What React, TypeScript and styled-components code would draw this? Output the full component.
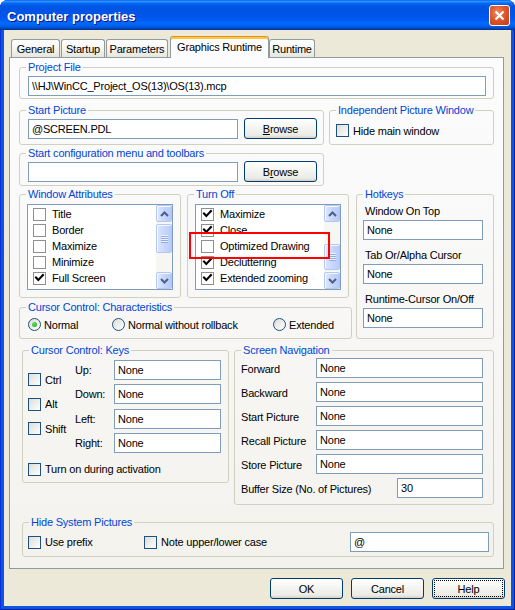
import React from "react";
import styled, { createGlobalStyle } from "styled-components";

const GlobalStyle = createGlobalStyle`
  html, body {
    margin: 0;
    padding: 0;
    background: #fff;
  }
  body {
    font-family: "Liberation Sans", Arial, sans-serif;
    font-size: 11px;
    letter-spacing: -0.2px;
    color: #000;
  }
  * {
    box-sizing: border-box;
  }
`;

/* ---------- window chrome ---------- */

const Window = styled.div`
  width: 515px;
  height: 610px;
  display: flex;
  flex-direction: column;
  background: #0d54e0;
  box-shadow: inset 1px 0 #0831d9, inset -1px 0 #001ea0, inset 0 -1px #001ea0;
  border-radius: 8px 8px 0 0;
  overflow: hidden;
`;

const TitleBar = styled.div`
  height: 30px;
  flex: none;
  display: flex;
  align-items: center;
  justify-content: space-between;
  padding: 0 5px 0 7px;
  background: linear-gradient(
    to bottom,
    #0058ee 0%,
    #3593ff 4%,
    #288eff 6%,
    #127dff 8%,
    #036ffc 10%,
    #0262ee 14%,
    #0057e5 20%,
    #0054e3 24%,
    #0055eb 56%,
    #005bf5 66%,
    #026afe 76%,
    #0062ef 86%,
    #0052d6 92%,
    #0040ab 96%,
    #003092 100%
  );
`;

const Title = styled.span`
  padding-top: 2px;
  color: #fff;
  font-weight: bold;
  font-size: 13px;
  letter-spacing: 0;
  text-shadow: 1px 1px #0f1089;
`;

const CloseButton = styled.div`
  width: 21px;
  height: 21px;
  border: 1px solid #fff;
  border-radius: 3px;
  display: flex;
  align-items: center;
  justify-content: center;
  background: radial-gradient(circle at 40% 35%, #f08a64 0%, #e0572c 45%, #c43a12 100%);
`;

const Client = styled.div`
  flex: 1;
  margin: 0 4px 4px;
  background: #ece9d8;
  padding: 6px 7px 0 5px;
  display: flex;
  flex-direction: column;
`;

/* ---------- tabs ---------- */

const TabRow = styled.div`
  height: 21px;
  display: flex;
  align-items: flex-end;
  gap: 1px;
  padding-left: 2px;
`;

const Tab = styled.div<{ $w: number; $active?: boolean }>`
  width: ${({ $w }) => $w}px;
  height: ${({ $active }) => ($active ? 22 : 18)}px;
  display: flex;
  align-items: center;
  justify-content: center;
  border: 1px solid #919b9c;
  border-bottom: none;
  border-radius: 3px 3px 0 0;
  background: ${({ $active }) =>
    $active ? "#fcfcfe" : "linear-gradient(to bottom, #fff, #f7f7f5 40%, #e7e6df)"};
  ${({ $active }) =>
    $active &&
    `
    position: relative;
    z-index: 1;
    margin: 0 -1px -1px 1px;
    padding-bottom: 2px;
    border-top: 1px solid #e68b2c;
    box-shadow: inset 0 2px 0 #ffc73c;
  `}
`;

const Panel = styled.div`
  height: 512px;
  display: flex;
  flex-direction: column;
  border: 1px solid #919b9c;
  background: linear-gradient(to bottom, #fcfcfe, #f3f2ed);
  padding: 3px 9px 0 9px;
`;

const Row = styled.div<{ $cols: string; $mt?: number; $ml?: number; $gap?: number }>`
  display: grid;
  grid-template-columns: ${({ $cols }) => $cols};
  column-gap: ${({ $gap }) => $gap ?? 5}px;
  align-items: start;
  margin-top: ${({ $mt }) => $mt ?? 0}px;
  margin-left: ${({ $ml }) => $ml ?? 0}px;
`;

const Column = styled.div<{ $gap: number }>`
  display: flex;
  flex-direction: column;
  gap: ${({ $gap }) => $gap}px;
`;

/* ---------- group boxes ---------- */

const Group = styled.fieldset<{ $h: number }>`
  margin: 0;
  padding: 0;
  min-width: 0;
  height: ${({ $h }) => $h}px;
  border: 1px solid #d0d0bf;
  border-radius: 3px;
`;

const Legend = styled.legend`
  margin-left: 6px;
  padding: 0 2px;
  line-height: 13px;
  color: #0046d5;
`;

const Body = styled.div<{ $pad: string }>`
  padding: ${({ $pad }) => $pad};
`;

const InlineRow = styled.div<{ $gap?: number }>`
  display: flex;
  align-items: center;
  gap: ${({ $gap }) => $gap ?? 0}px;
`;

/* ---------- controls ---------- */

const TextBox = styled.input<{ $w?: number }>`
  width: ${({ $w }) => ($w ? `${$w}px` : "100%")};
  height: 20px;
  flex: none;
  border: 1px solid #7f9db9;
  background: #fff;
  padding: 0 3px;
  margin: 0;
  font: inherit;
  letter-spacing: inherit;
  color: #000;
  outline: none;
`;

const XpButton = styled.button<{ $focus?: boolean }>`
  width: 73px;
  height: 21px;
  flex: none;
  padding: 0;
  border: 1px solid #003c74;
  border-radius: 3px;
  background: linear-gradient(to bottom, #fff 0%, #f3f3ef 50%, #ecebe6 85%, #d6d0c5 100%);
  font: inherit;
  letter-spacing: inherit;
  color: #000;
  outline: ${({ $focus }) => ($focus ? "1px dotted #000" : "none")};
  outline-offset: -3px;
`;

const Box = styled.span<{ $flat?: boolean }>`
  width: 13px;
  height: 13px;
  flex: none;
  display: inline-flex;
  align-items: center;
  justify-content: center;
  border: 1px solid ${({ $flat }) => ($flat ? "#8e8f8f" : "#1c5180")};
  background: ${({ $flat }) => ($flat ? "#fff" : "linear-gradient(135deg, #dcdcd7 0%, #fff 100%)")};
`;

const CheckMark = () => (
  <svg width="11" height="11" viewBox="0 0 11 11">
    <path d="M2 4.5 L4.3 7 L9 2" fill="none" stroke="#000" strokeWidth="2" strokeLinecap="square" />
  </svg>
);

const CheckBox = ({ checked, flat }: { checked?: boolean; flat?: boolean }) => (
  <Box $flat={flat}>{checked && <CheckMark />}</Box>
);

const CheckLabel = styled.label<{ $w?: number; $mt?: number; $grow?: boolean }>`
  display: flex;
  align-items: center;
  gap: 4px;
  height: 13px;
  width: ${({ $w }) => ($w ? `${$w}px` : "auto")};
  flex: ${({ $grow }) => ($grow ? 1 : "none")};
  margin-top: ${({ $mt }) => $mt ?? 0}px;
  white-space: nowrap;
`;

const RadioDot = styled.span<{ $on?: boolean }>`
  width: 13px;
  height: 13px;
  flex: none;
  border-radius: 50%;
  border: 1px solid #1c5180;
  background: linear-gradient(135deg, #dcdcd7 0%, #fff 100%);
  display: inline-flex;
  align-items: center;
  justify-content: center;
  &::after {
    content: "";
    display: ${({ $on }) => ($on ? "block" : "none")};
    width: 5px;
    height: 5px;
    border-radius: 50%;
    background: radial-gradient(circle at 35% 35%, #63e25e, #21a121);
  }
`;

const RadioOption = styled.label<{ $w?: number }>`
  display: flex;
  align-items: center;
  gap: 3px;
  width: ${({ $w }) => ($w ? `${$w}px` : "auto")};
  white-space: nowrap;
`;

/* ---------- list box with XP scroll bar ---------- */

const ListWrap = styled.div`
  position: relative;
  width: 146px;
`;

const ListFrame = styled.div`
  width: 146px;
  height: 86px;
  display: flex;
  border: 1px solid #7f9db9;
  background: #fff;
  overflow: hidden;
`;

const ListItems = styled.div`
  flex: 1;
  padding-top: 1px;
  overflow: hidden;
`;

const ListItem = styled.div`
  height: 16px;
  display: flex;
  align-items: center;
  gap: 6px;
  padding-left: 5px;
  white-space: nowrap;
`;

const ScrollBar = styled.div`
  width: 16px;
  flex: none;
  display: flex;
  flex-direction: column;
  background: #f6f6f2;
`;

const ScrollButton = styled.div`
  height: 17px;
  flex: none;
  display: flex;
  align-items: center;
  justify-content: center;
  border: 1px solid #b4c6f3;
  border-radius: 2px;
  background: linear-gradient(to right, #dfe8fe, #c2d3fc 60%, #b7cafa);
  box-shadow: inset 1px 1px #f6f9ff;
`;

const Track = styled.div<{ $end?: boolean }>`
  flex: 1;
  display: flex;
  flex-direction: column;
  justify-content: ${({ $end }) => ($end ? "flex-end" : "flex-start")};
  padding: 2px 0;
`;

const Thumb = styled.div<{ $h: number }>`
  height: ${({ $h }) => $h}px;
  display: flex;
  align-items: center;
  justify-content: center;
  border: 1px solid #b4c6f3;
  border-radius: 2px;
  background: linear-gradient(to right, #dbe5fd, #c6d5fc 60%, #b9cbfa);
  box-shadow: inset 1px 1px #f6f9ff;
`;

const Grip = styled.span`
  width: 7px;
  height: 8px;
  background: repeating-linear-gradient(to bottom, #eef3fe 0 1px, #8daaea 1px 2px);
`;

const Chevron = ({ down }: { down?: boolean }) => (
  <svg width="9" height="6" viewBox="0 0 9 6">
    <path
      d={down ? "M1 1 L4.5 4.5 L8 1" : "M1 5 L4.5 1.5 L8 5"}
      fill="none"
      stroke="#4d6185"
      strokeWidth="2"
    />
  </svg>
);

const Highlight = styled.div`
  position: absolute;
  left: -6px;
  top: 28px;
  width: 141px;
  height: 27px;
  border: 2px solid #ff0000;
  pointer-events: none;
`;

type Item = [string, boolean];

const ListBox = ({
  items,
  thumbH,
  thumbEnd,
}: {
  items: Item[];
  thumbH: number;
  thumbEnd?: boolean;
}) => (
  <ListFrame>
    <ListItems>
      {items.map(([label, checked]) => (
        <ListItem key={label}>
          <CheckBox flat checked={checked} />
          <span>{label}</span>
        </ListItem>
      ))}
    </ListItems>
    <ScrollBar>
      <ScrollButton>
        <Chevron />
      </ScrollButton>
      <Track $end={thumbEnd}>
        <Thumb $h={thumbH}>
          <Grip />
        </Thumb>
      </Track>
      <ScrollButton>
        <Chevron down />
      </ScrollButton>
    </ScrollBar>
  </ListFrame>
);

/* ---------- hotkeys / keys / navigation ---------- */

const HotkeyBody = styled.div`
  display: flex;
  flex-direction: column;
  gap: 9px;
  padding: 4px 10px 0 6px;
`;

const HotkeyItem = styled.div`
  display: flex;
  flex-direction: column;
  gap: 2px;
`;

const HotkeyLabel = styled.span`
  line-height: 13px;
  padding-left: 2px;
  white-space: nowrap;
`;

const KeysGrid = styled.div`
  display: grid;
  grid-template-columns: 47px 39px 107px;
  grid-auto-rows: 20px;
  row-gap: 4.33px;
  align-items: center;
`;

const ModColumn = styled.div`
  grid-column: 1;
  grid-row: 1 / 5;
  align-self: stretch;
  display: flex;
  flex-direction: column;
  justify-content: center;
  gap: 11.5px;
  padding-bottom: 4px;
`;

const NavGrid = styled.div`
  display: grid;
  grid-template-columns: 75px 167px;
  grid-auto-rows: 20px;
  row-gap: 4px;
  align-items: center;
`;

const NavLabel = styled.span`
  padding-top: 2px;
  white-space: nowrap;
`;

const BufferRow = styled.div`
  grid-column: 1 / -1;
  display: flex;
  align-items: center;
  justify-content: space-between;
`;

const ButtonRow = styled.div`
  display: flex;
  justify-content: flex-end;
  gap: 8px;
  margin: 9px -1px 0 0;
`;

const windowAttributes: Item[] = [
  ["Title", false],
  ["Border", false],
  ["Maximize", false],
  ["Minimize", false],
  ["Full Screen", true],
];

const turnOff: Item[] = [
  ["Maximize", true],
  ["Close", true],
  ["Optimized Drawing", false],
  ["Decluttering", true],
  ["Extended zooming", true],
];

const navRows = ["Forward", "Backward", "Start Picture", "Recall Picture", "Store Picture"];

export default function App() {
  return (
    <>
      <GlobalStyle />
      <Window>
        <TitleBar>
          <Title>Computer properties</Title>
          <CloseButton>
            <svg width="11" height="11" viewBox="0 0 11 11">
              <path d="M1.5 1.5 L9.5 9.5 M9.5 1.5 L1.5 9.5" stroke="#fff" strokeWidth="2.2" />
            </svg>
          </CloseButton>
        </TitleBar>

        <Client>
          <TabRow>
            <Tab $w={49}>General</Tab>
            <Tab $w={44}>Startup</Tab>
            <Tab $w={62}>Parameters</Tab>
            <Tab $w={99} $active>
              Graphics Runtime
            </Tab>
            <Tab $w={46}>Runtime</Tab>
          </TabRow>

          <Panel>
            <Group $h={38}>
              <Legend>Project File</Legend>
              <Body $pad="2px 7px 0 8px">
                <TextBox defaultValue={"\\\\HJ\\WinCC_Project_OS(13)\\OS(13).mcp"} />
              </Body>
            </Group>

            <Row $cols="305px 1fr" $mt={5}>
              <Column $gap={2}>
                <Group $h={41}>
                  <Legend>Start Picture</Legend>
                  <Body $pad="1px 0 0 8px">
                    <InlineRow $gap={6}>
                      <TextBox $w={210} defaultValue="@SCREEN.PDL" />
                      <XpButton>
                        <u>B</u>rowse
                      </XpButton>
                    </InlineRow>
                  </Body>
                </Group>
                <Group $h={39}>
                  <Legend>Start configuration menu and toolbars</Legend>
                  <Body $pad="1px 0 0 8px">
                    <InlineRow $gap={6}>
                      <TextBox $w={210} defaultValue="" />
                      <XpButton>
                        B<u>r</u>owse
                      </XpButton>
                    </InlineRow>
                  </Body>
                </Group>
              </Column>
              <Group $h={41}>
                <Legend>Independent Picture Window</Legend>
                <Body $pad="7px 0 0 6px">
                  <CheckLabel>
                    <CheckBox />
                    Hide main window
                  </CheckLabel>
                </Body>
              </Group>
            </Row>

            <Row $cols="333px 1fr" $mt={2} $gap={4}>
              <Column $gap={3}>
                <Row $cols="162px 162px" $gap={6}>
                  <Group $h={110}>
                    <Legend>Window Attributes</Legend>
                    <Body $pad="3px 0 0 7px">
                      <ListBox items={windowAttributes} thumbH={29} />
                    </Body>
                  </Group>
                  <Group $h={110}>
                    <Legend>Turn Off</Legend>
                    <Body $pad="3px 0 0 7px">
                      <ListWrap>
                        <ListBox items={turnOff} thumbH={26} thumbEnd />
                        <Highlight />
                      </ListWrap>
                    </Body>
                  </Group>
                </Row>
                <Group $h={38}>
                  <Legend>Cursor Control: Characteristics</Legend>
                  <Body $pad="4px 0 0 8px">
                    <InlineRow>
                      <RadioOption $w={84}>
                        <RadioDot $on />
                        Normal
                      </RadioOption>
                      <RadioOption $w={161}>
                        <RadioDot />
                        Normal without rollback
                      </RadioOption>
                      <RadioOption>
                        <RadioDot />
                        Extended
                      </RadioOption>
                    </InlineRow>
                  </Body>
                </Group>
              </Column>
              <Group $h={151}>
                <Legend>Hotkeys</Legend>
                <HotkeyBody>
                  <HotkeyItem>
                    <HotkeyLabel>Window On Top</HotkeyLabel>
                    <TextBox $w={120} defaultValue="None" />
                  </HotkeyItem>
                  <HotkeyItem>
                    <HotkeyLabel>Tab Or/Alpha Cursor</HotkeyLabel>
                    <TextBox $w={120} defaultValue="None" />
                  </HotkeyItem>
                  <HotkeyItem>
                    <HotkeyLabel>Runtime-Cursor On/Off</HotkeyLabel>
                    <TextBox $w={120} defaultValue="None" />
                  </HotkeyItem>
                </HotkeyBody>
              </Group>
            </Row>

            <Row $cols="207px 1fr" $mt={5} $ml={3}>
              <Group $h={139}>
                <Legend>Cursor Control: Keys</Legend>
                <Body $pad="3px 6px 0 5px">
                  <KeysGrid>
                    <ModColumn>
                      <CheckLabel>
                        <CheckBox />
                        Ctrl
                      </CheckLabel>
                      <CheckLabel>
                        <CheckBox />
                        Alt
                      </CheckLabel>
                      <CheckLabel>
                        <CheckBox />
                        Shift
                      </CheckLabel>
                    </ModColumn>
                    {["Up:", "Down:", "Left:", "Right:"].map((k) => (
                      <React.Fragment key={k}>
                        <span>{k}</span>
                        <TextBox defaultValue="None" />
                      </React.Fragment>
                    ))}
                  </KeysGrid>
                  <CheckLabel $mt={10}>
                    <CheckBox />
                    Turn on during activation
                  </CheckLabel>
                </Body>
              </Group>
              <Group $h={161}>
                <Legend>Screen Navigation</Legend>
                <Body $pad="1px 9px 0 6px">
                  <NavGrid>
                    {navRows.map((n) => (
                      <React.Fragment key={n}>
                        <NavLabel>{n}</NavLabel>
                        <TextBox defaultValue="None" />
                      </React.Fragment>
                    ))}
                    <BufferRow>
                      <NavLabel>Buffer Size (No. of Pictures)</NavLabel>
                      <TextBox $w={86} defaultValue="30" />
                    </BufferRow>
                  </NavGrid>
                </Body>
              </Group>
            </Row>

            <Row $cols="1fr" $mt={11} $ml={3}>
              <Group $h={41}>
                <Legend>Hide System Pictures</Legend>
                <Body $pad="3px 4px 0 5px">
                  <InlineRow>
                    <CheckLabel $w={116}>
                      <CheckBox />
                      Use prefix
                    </CheckLabel>
                    <CheckLabel $grow>
                      <CheckBox />
                      Note upper/lower case
                    </CheckLabel>
                    <TextBox $w={139} defaultValue="@" />
                  </InlineRow>
                </Body>
              </Group>
            </Row>
          </Panel>

          <ButtonRow>
            <XpButton>OK</XpButton>
            <XpButton>Cancel</XpButton>
            <XpButton $focus>Help</XpButton>
          </ButtonRow>
        </Client>
      </Window>
    </>
  );
}
